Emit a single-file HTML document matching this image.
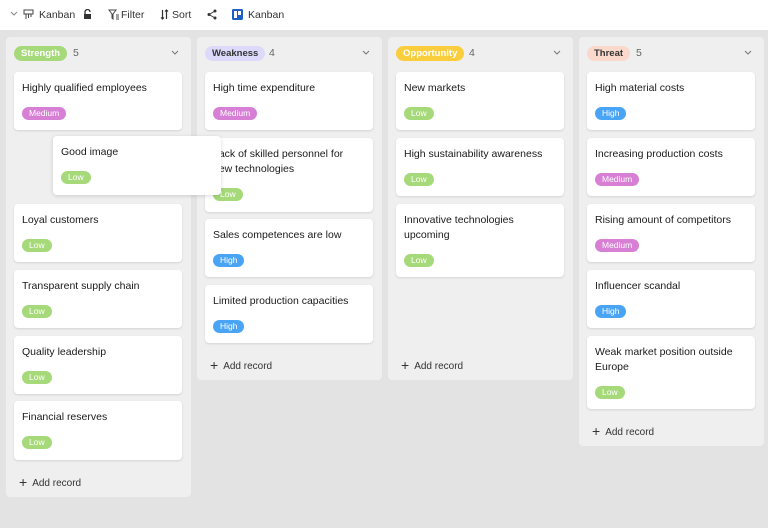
<!DOCTYPE html>
<html><head><meta charset="utf-8">
<style>
*{margin:0;padding:0;box-sizing:border-box}
body{width:768px;height:528px;background:#e3e3e3;font-family:"Liberation Sans",sans-serif;color:#222;position:relative;overflow:hidden}
.tb{position:absolute;left:0;top:0;width:768px;height:30px;background:#fff;font-size:10.5px;color:#333}
.tb span{position:absolute;top:9px}
.col{position:absolute;background:#efefef;border-radius:4px;width:185px;top:37px}
.hd{position:absolute;top:9px;left:8px;font-size:9.5px;font-weight:bold;border-radius:8px;padding:2px 7px;height:15px;line-height:11px}
.cnt{position:absolute;top:10px;font-size:10.5px;color:#666}
.chev{position:absolute;top:13px;right:12px}
.card{position:absolute;left:8px;width:168px;background:#fff;border-radius:4px;box-shadow:0 1px 2px rgba(0,0,0,.12)}
.t{position:absolute;left:8px;top:9px;font-size:10.5px;line-height:15px;color:#1a1a1a;width:145px}
.tag{position:absolute;left:8px;height:13px;line-height:13px;font-size:8.5px;color:#fff;border-radius:7px;padding:0 7px}
.low{background:#a6d97a}.med{background:#d77fd4}.high{background:#4aa4f5}
.add{position:absolute;left:13px;font-size:10px;color:#333}
.add b{font-weight:normal;font-size:14px;position:relative;top:1px;margin-right:5px}
</style></head><body>
<div class="tb">
<svg style="position:absolute;left:10px;top:11px" width="8" height="6"><path d="M1 1l3 3 3-3" stroke="#888" fill="none"/></svg>
<svg style="position:absolute;left:23px;top:9px" width="11" height="11"><path d="M1 1h9v4h-9z M3 5v5 M5.5 5v4 M8 5v3" stroke="#444" fill="none"/></svg>
<span style="left:39px">Kanban</span>
<svg style="position:absolute;left:83px;top:9px" width="9" height="11"><path d="M2 5V3a2.5 2.5 0 0 1 5 0" stroke="#333" fill="none" stroke-width="1.3"/><rect x="1" y="5" width="7" height="5" fill="#333"/></svg>
<svg style="position:absolute;left:108px;top:9px" width="11" height="11"><path d="M1 1h7l-3 4v5l-1-1V5z M8 6h3 M8 8h3 M8 10h3" stroke="#444" fill="none"/></svg>
<span style="left:121px">Filter</span>
<svg style="position:absolute;left:160px;top:9px" width="9" height="11"><path d="M2.5 1v9 M1 8.5l1.5 1.5 1.5-1.5 M6.5 10V1 M5 2.5l1.5-1.5 1.5 1.5" stroke="#333" fill="none" stroke-width="1.2"/></svg>
<span style="left:172px">Sort</span>
<svg style="position:absolute;left:207px;top:9px" width="10" height="11"><circle cx="2" cy="5.5" r="1.5" fill="#333"/><circle cx="8" cy="2" r="1.5" fill="#333"/><circle cx="8" cy="9" r="1.5" fill="#333"/><path d="M2 5.5L8 2M2 5.5L8 9" stroke="#333"/></svg>
<svg style="position:absolute;left:232px;top:9px" width="11" height="11"><rect width="11" height="11" rx="1.5" fill="#1d5fc4"/><rect x="2" y="2" width="3" height="7" fill="#fff"/><rect x="6" y="2" width="3" height="4" fill="#fff"/></svg>
<span style="left:248px">Kanban</span>
</div>

<div class="col" style="left:6px;height:460px">
<span class="hd" style="background:#a6d97a;color:#fff">Strength</span><span class="cnt" style="left:67px">5</span>
<svg class="chev" width="8" height="6"><path d="M1 1l3 3 3-3" stroke="#777" fill="none"/></svg>
<div class="card" style="top:35px;height:58px"><div class="t">Highly qualified employees</div><span class="tag med" style="top:35px">Medium</span></div>
<div class="card" style="top:167px;height:58px"><div class="t">Loyal customers</div><span class="tag low" style="top:35px">Low</span></div>
<div class="card" style="top:233px;height:58px"><div class="t">Transparent supply chain</div><span class="tag low" style="top:35px">Low</span></div>
<div class="card" style="top:299px;height:58px"><div class="t">Quality leadership</div><span class="tag low" style="top:35px">Low</span></div>
<div class="card" style="top:364px;height:59px"><div class="t">Financial reserves</div><span class="tag low" style="top:35px">Low</span></div>
<div class="add" style="top:436px"><b>+</b>Add record</div>
</div>

<div class="col" style="left:197px;height:343px">
<span class="hd" style="background:#ddd9fb;color:#333">Weakness</span><span class="cnt" style="left:72px">4</span>
<svg class="chev" width="8" height="6"><path d="M1 1l3 3 3-3" stroke="#777" fill="none"/></svg>
<div class="card" style="top:35px;height:58px"><div class="t">High time expenditure</div><span class="tag med" style="top:35px">Medium</span></div>
<div class="card" style="top:101px;height:74px"><div class="t">Lack of skilled personnel for new technologies</div><span class="tag low" style="top:50px">Low</span></div>
<div class="card" style="top:182px;height:58px"><div class="t">Sales competences are low</div><span class="tag high" style="top:35px">High</span></div>
<div class="card" style="top:248px;height:58px"><div class="t">Limited production capacities</div><span class="tag high" style="top:35px">High</span></div>
<div class="add" style="top:319px"><b>+</b>Add record</div>
</div>

<div class="col" style="left:388px;height:343px">
<span class="hd" style="background:#f9cd3c;color:#fff">Opportunity</span><span class="cnt" style="left:81px">4</span>
<svg class="chev" width="8" height="6"><path d="M1 1l3 3 3-3" stroke="#777" fill="none"/></svg>
<div class="card" style="top:35px;height:58px"><div class="t">New markets</div><span class="tag low" style="top:35px">Low</span></div>
<div class="card" style="top:101px;height:58px"><div class="t">High sustainability awareness</div><span class="tag low" style="top:35px">Low</span></div>
<div class="card" style="top:167px;height:73px"><div class="t">Innovative technologies upcoming</div><span class="tag low" style="top:50px">Low</span></div>
<div class="add" style="top:319px"><b>+</b>Add record</div>
</div>

<div class="col" style="left:579px;height:409px">
<span class="hd" style="background:#fbd8cc;color:#333">Threat</span><span class="cnt" style="left:57px">5</span>
<svg class="chev" width="8" height="6"><path d="M1 1l3 3 3-3" stroke="#777" fill="none"/></svg>
<div class="card" style="top:35px;height:58px"><div class="t">High material costs</div><span class="tag high" style="top:35px">High</span></div>
<div class="card" style="top:101px;height:58px"><div class="t">Increasing production costs</div><span class="tag med" style="top:35px">Medium</span></div>
<div class="card" style="top:167px;height:58px"><div class="t">Rising amount of competitors</div><span class="tag med" style="top:35px">Medium</span></div>
<div class="card" style="top:233px;height:58px"><div class="t">Influencer scandal</div><span class="tag high" style="top:35px">High</span></div>
<div class="card" style="top:299px;height:73px"><div class="t">Weak market position outside Europe</div><span class="tag low" style="top:50px">Low</span></div>
<div class="add" style="top:385px"><b>+</b>Add record</div>
</div>

<div class="card" style="left:53px;top:136px;height:59px;box-shadow:0 1px 4px rgba(0,0,0,.15)"><div class="t">Good image</div><span class="tag low" style="top:35px">Low</span></div>
</body></html>
